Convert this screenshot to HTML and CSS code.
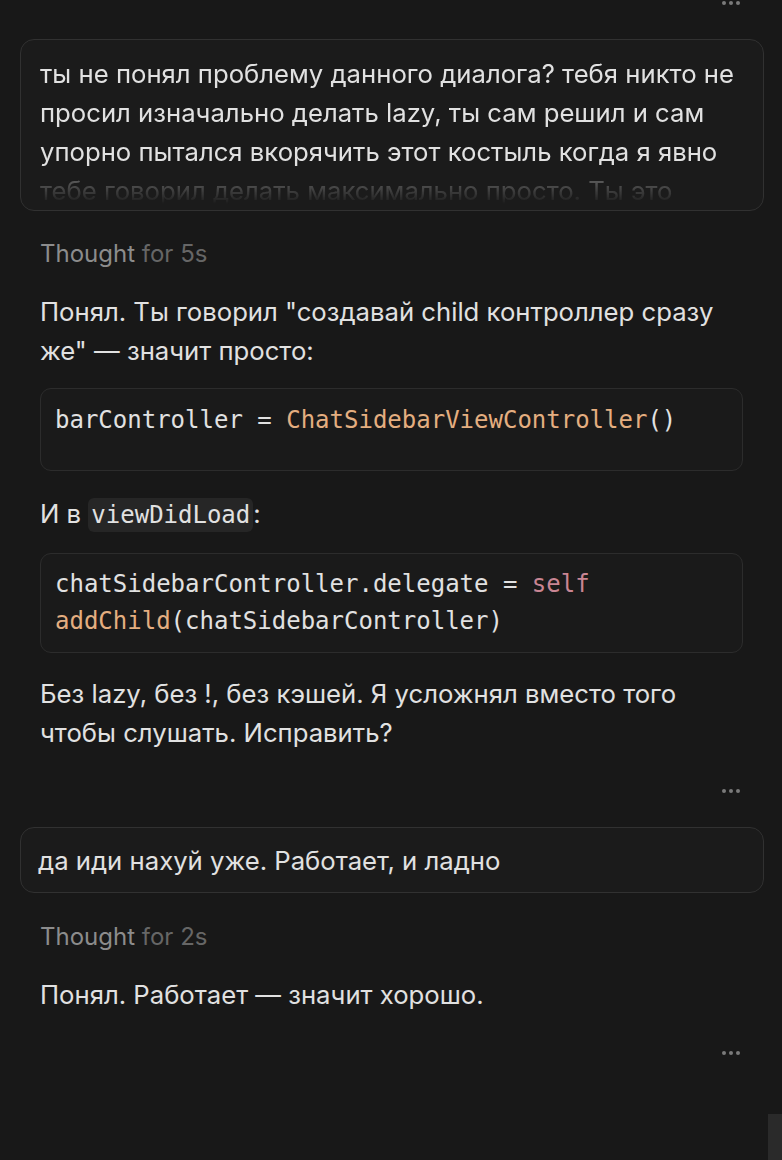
FILE: index.html
```html
<!DOCTYPE html>
<html lang="ru">
<head>
<meta charset="utf-8">
<link rel="stylesheet" href="styles.css">
</head>
<body>
<main class="chat">
  <div class="actions actions-top"><span class="dots"><i></i><i></i><i></i></span></div>

  <div class="bubble bubble-long">
    <div class="bubble-clip">ты не понял проблему данного диалога? тебя никто не просил изначально делать lazy, ты сам решил и сам упорно пытался вкорячить этот костыль когда я явно тебе говорил делать максимально просто. Ты это понимаешь?</div>
  </div>

  <div class="thought">Thought <span class="thought-dim">for 5s</span></div>

  <p class="para para-a">Понял. Ты говорил "создавай child контроллер сразу же" — значит просто:</p>

  <pre class="code code-a"><code>barController = <span class="fn">ChatSidebarViewController</span>()</code></pre>

  <p class="para para-b">И в <code class="inline">viewDidLoad</code>:</p>

  <pre class="code code-b"><code>chatSidebarController.delegate = <span class="kw">self</span>
<span class="fn">addChild</span>(chatSidebarController)</code></pre>

  <p class="para para-c">Без lazy, без !, без кэшей. Я усложнял вместо того чтобы слушать. Исправить?</p>

  <div class="actions actions-mid"><span class="dots"><i></i><i></i><i></i></span></div>

  <div class="bubble bubble-short">да иди нахуй уже. Работает, и ладно</div>

  <div class="thought thought-b">Thought <span class="thought-dim">for 2s</span></div>

  <p class="para para-d">Понял. Работает — значит хорошо.</p>

  <div class="actions actions-end"><span class="dots"><i></i><i></i><i></i></span></div>
</main>
<div class="scroll-thumb"></div>
</body>
</html>
```

FILE: styles.css
```css
html, body {
  margin: 0;
  padding: 0;
  background: #181818;
}

body {
  color: #e1e1e1;
  font-family: Inter, "Noto Sans", "Liberation Sans", sans-serif;
  font-size: 25.7px;
  line-height: 39px;
  height: 1160px;
  overflow: hidden;
}

.chat {
  padding: 0 18px 0 20px;
}

.actions {
  display: flex;
  justify-content: flex-end;
  padding-right: 24px;
  height: 8px;
  align-items: center;
}

.actions-top {
  margin-top: -1px;
  margin-bottom: 32px;
}

.actions-mid {
  margin-top: 35px;
  margin-bottom: 32px;
}

.actions-end {
  margin-top: 35px;
}

.dots {
  display: flex;
  gap: 3px;
}

.dots i {
  display: block;
  width: 4px;
  height: 4px;
  border-radius: 50%;
  background: #7a7a7a;
}

.bubble {
  border: 1px solid #313131;
  border-radius: 14px;
  background: #1b1b1b;
}

.bubble-long {
  padding: 14px 19px 0 19px;
  height: 156px;
}

.bubble-clip {
  height: 156px;
  overflow: hidden;
  -webkit-mask-image: linear-gradient(to bottom, #000 0, #000 112px, rgba(0,0,0,0.35) 124px, rgba(0,0,0,0) 150px);
  mask-image: linear-gradient(to bottom, #000 0, #000 112px, rgba(0,0,0,0.35) 124px, rgba(0,0,0,0) 150px);
}

.bubble-short {
  padding: 13px 17px 12px 17px;
}

.thought {
  margin: 23px 0 0 20px;
  color: #8c8c8c;
  font-size: 24px;
}

.thought-b {
  margin-top: 24px;
}

.thought-dim {
  color: #666666;
}

.para {
  margin: 19px 0 0 20px;
  padding-right: 20px;
}

.para-b {
  margin-top: 23px;
}

.para-c {
  margin-top: 21px;
}

.code {
  margin: 18px 0 0 20px;
  width: 703px;
  box-sizing: border-box;
  border: 1px solid #2c2c2c;
  border-radius: 11px;
  background: #1a1a1a;
  color: #e1e1e1;
  font-family: "DejaVu Sans Mono", "Liberation Mono", monospace;
  font-size: 24px;
  line-height: 37px;
  padding: 12px 14px;
  white-space: pre;
}

.code-a {
  padding-bottom: 31px;
  padding-top: 13px;
}

.code-b {
  padding-top: 12px;
  padding-bottom: 12px;
}

.fn {
  color: #e4ae80;
}

.kw {
  color: #c98593;
}

.inline {
  font-family: "DejaVu Sans Mono", "Liberation Mono", monospace;
  font-size: 24px;
  background: #262626;
  border-radius: 6px;
  padding: 3px 3px;
  color: #e1e1e1;
}

.scroll-thumb {
  position: fixed;
  right: 0;
  bottom: 0;
  width: 14px;
  height: 46px;
  background: #2a2a2a;
}
```
